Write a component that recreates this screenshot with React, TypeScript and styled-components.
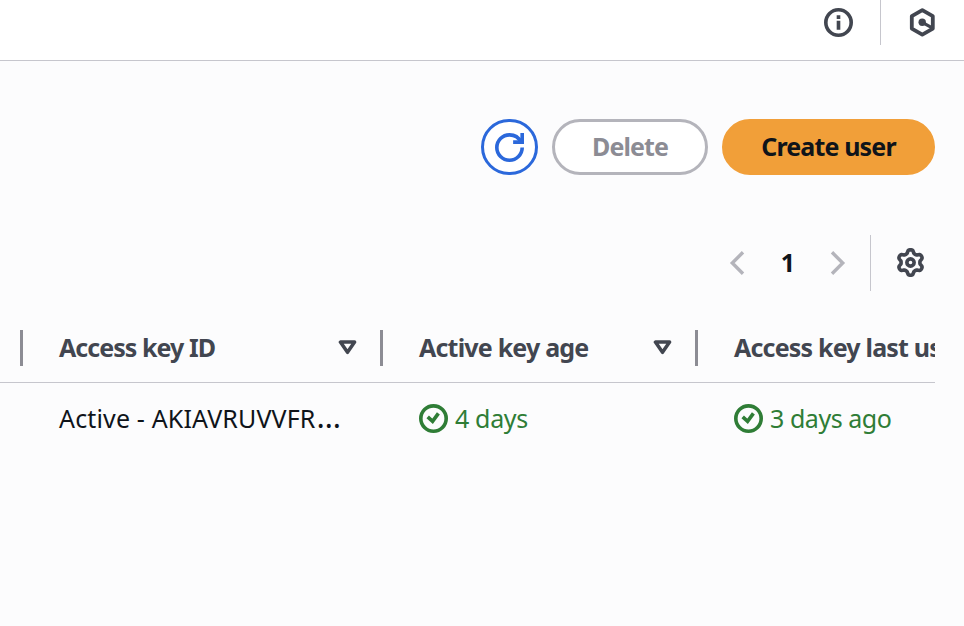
import React from "react";
import styled, { createGlobalStyle } from "styled-components";

const GlobalStyle = createGlobalStyle`
  * { box-sizing: border-box; }
  html, body { margin: 0; background: #fcfcfd; overflow: hidden; }
  body { font-family: "Noto Sans", sans-serif; font-size: 25px; color: #0f141a; }
  button { font: inherit; color: inherit; margin: 0; padding: 0; border: 0; background: none; }
`;

const Page = styled.div`
  width: 964px;
  height: 626px;
  overflow: hidden;
  background: #fcfcfd;
`;

const TopBar = styled.header`
  display: flex;
  justify-content: flex-end;
  height: 61px;
  padding-right: 27px;
  background: #fff;
  border-bottom: 1px solid #c6c6cd;
`;

const TopButton = styled.button`
  display: flex;
  width: 29px;
  height: 45px;
  padding-top: 8px;
  color: #424650;
`;

const TopDivider = styled.div`
  width: 1px;
  height: 45px;
  margin: 0 27px;
  background: #c6c6cd;
`;

const Content = styled.main`
  width: 935px;
  padding-top: 58px;
  overflow: hidden;
`;

const Actions = styled.div`
  display: flex;
  justify-content: flex-end;
  gap: 14px;
  height: 56px;
`;

const IconButton = styled.button`
  display: flex;
  align-items: center;
  justify-content: center;
  width: 57px;
  height: 56px;
  border: 3px solid #2b68db;
  border-radius: 28px;
  color: #2b68db;
  background: #fff;
`;

const PillButton = styled.button<{ $primary?: boolean }>`
  width: ${(p) => (p.$primary ? 213 : 156)}px;
  height: 56px;
  padding-bottom: 2px;
  border: 3px solid ${(p) => (p.$primary ? "#f19f39" : "#b4b4bb")};
  border-radius: 28px;
  background: ${(p) => (p.$primary ? "#f19f39" : "#fff")};
  color: ${(p) => (p.$primary ? "#0f141a" : "#8c8c94")};
  font-weight: 700;
  white-space: nowrap;
`;

const Pagination = styled.nav`
  display: flex;
  justify-content: flex-end;
  align-items: center;
  height: 56px;
  margin-top: 60px;
  padding-right: 10px;
`;

const PageArrow = styled.button`
  display: flex;
  width: 16px;
  height: 24px;
  margin-bottom: 1px;
  color: #b4b4bb;
`;

const PageNumber = styled.button`
  width: 85px;
  font-weight: 700;
  text-align: center;
  line-height: 54px;
  padding: 0 0 2px 1px;
`;

const PageDivider = styled.div`
  width: 1px;
  height: 56px;
  margin: 0 25px 0 24px;
  background: #c6c6cd;
`;

const SettingsButton = styled.button`
  display: flex;
  margin-bottom: 1px;
  color: #424650;
`;

const Grid = styled.div<{ $head?: boolean }>`
  display: grid;
  grid-template-columns: 23px 360px 315px 315px;
  width: 935px;
  overflow: hidden;
  height: ${(p) => (p.$head ? 53 : 71)}px;
  border-bottom: ${(p) => (p.$head ? "1px solid #c6c6cd" : "0")};
`;

const HeadCell = styled.div<{ $edge?: boolean }>`
  display: flex;
  align-items: center;
  height: 36px;
  padding: ${(p) => (p.$edge ? "0" : "0 23px 2px 36px")};
  border-right: 3px solid #8c8c94;
  color: #424650;
  font-weight: 700;
  white-space: nowrap;
`;

const Cell = styled.div`
  display: flex;
  align-items: center;
  padding-left: 36px;
  white-space: nowrap;
`;

const Status = styled.div`
  display: flex;
  align-items: center;
  gap: 7px;
  color: #2f7d36;
`;

const Label = styled.span<{ $tracking?: number }>`
  letter-spacing: ${(p) => p.$tracking ?? 0}px;
`;

const Value = styled(Label)`
  margin-bottom: 2px;
`;

const Ellipsis = styled.span`
  padding-left: 1px;
  font-size: 31px;
  line-height: 1;
`;

const SortIcon = styled.svg`
  margin-left: auto;
  flex: none;
`;

const Table = styled.section`
  margin-top: 39px;
`;

const line = { fill: "none", stroke: "currentColor", strokeWidth: 2 } as const;

const InfoIcon = () => (
  <svg width="29" height="29" viewBox="0 0 16 16">
    <circle cx="8" cy="8" r="7" {...line} />
    <path d="M8 7v5M8 4v2" {...line} />
  </svg>
);

const HexIcon = () => (
  <svg width="29" height="29" viewBox="0 0 29 29">
    <path d="M14.3 2.1 24.8 8.2v12.4L14.3 26.7 3.8 20.6V8.2Z" {...line} strokeWidth={3.8} strokeLinejoin="round" />
    <circle cx="14.2" cy="14.3" r="3.7" fill="currentColor" />
    <path d="m14.2 14.3 10 5.6" {...line} strokeWidth={3.2} />
  </svg>
);

const RefreshIcon = () => (
  <svg width="29" height="29" viewBox="0 0 16 16">
    <path d="M15 8A7 7 0 1 1 8 1C10.9 1 13.2 2.6 14.3 5" {...line} />
    <path d="M15 0v5h-5" {...line} />
  </svg>
);

const gearPath =
  Array.from({ length: 120 }, (_, i) => {
    const t = (i / 120) * Math.PI * 2;
    const r = 6.1 - 0.95 * Math.tanh(1.8 * Math.cos(6 * t));
    return `${i ? "L" : "M"}${(8 + r * Math.cos(t)).toFixed(2)} ${(8 + r * Math.sin(t)).toFixed(2)}`;
  }).join("") + "Z";

const GearIcon = () => (
  <svg width="29" height="29" viewBox="0 0 16 16">
    <path d={gearPath} {...line} strokeLinejoin="round" />
    <circle cx="8" cy="8" r="2" {...line} />
  </svg>
);

const Chevron = ({ next }: { next?: boolean }) => (
  <svg width="16" height="24" viewBox="0 0 16 24">
    <path d={next ? "M2 1.3 12.7 12 2 22.7" : "M14 1.3 3.3 12 14 22.7"} {...line} strokeWidth={3.4} />
  </svg>
);

const Sort = () => (
  <SortIcon width="19" height="15" viewBox="0 0 19 15">
    <path d="M2.4 2.1h14.2L9.5 12.3Z" {...line} strokeWidth={3.5} strokeLinejoin="round" />
  </SortIcon>
);

const CheckIcon = () => (
  <svg width="29" height="29" viewBox="0 0 16 16">
    <circle cx="8" cy="8" r="7" {...line} />
    <path d="m4.8 7.1 2.7 2.5 3.2-4.4" {...line} />
  </svg>
);

export default function App() {
  return (
    <>
      <GlobalStyle />
      <Page>
        <TopBar>
          <TopButton aria-label="Info"><InfoIcon /></TopButton>
          <TopDivider />
          <TopButton aria-label="Assistant"><HexIcon /></TopButton>
        </TopBar>
        <Content>
          <Actions>
            <IconButton aria-label="Refresh"><RefreshIcon /></IconButton>
            <PillButton><Label $tracking={-0.9}>Delete</Label></PillButton>
            <PillButton $primary><Label $tracking={-0.85}>Create user</Label></PillButton>
          </Actions>
          <Pagination>
            <PageArrow aria-label="Previous page"><Chevron /></PageArrow>
            <PageNumber>1</PageNumber>
            <PageArrow aria-label="Next page"><Chevron next /></PageArrow>
            <PageDivider />
            <SettingsButton aria-label="Preferences"><GearIcon /></SettingsButton>
          </Pagination>
          <Table>
            <Grid $head>
              <HeadCell $edge />
              <HeadCell><Label $tracking={-0.95}>Access key ID</Label><Sort /></HeadCell>
              <HeadCell><Label $tracking={-0.8}>Active key age</Label><Sort /></HeadCell>
              <HeadCell><Label $tracking={-0.8}>Access key last used</Label></HeadCell>
            </Grid>
            <Grid>
              <Cell />
              <Cell><Value $tracking={0.15}>Active - AKIAVRUVVFR<Ellipsis>…</Ellipsis></Value></Cell>
              <Cell><Status><CheckIcon /><Value $tracking={-0.35}>4 days</Value></Status></Cell>
              <Cell><Status><CheckIcon /><Value $tracking={-0.45}>3 days ago</Value></Status></Cell>
            </Grid>
          </Table>
        </Content>
      </Page>
    </>
  );
}
